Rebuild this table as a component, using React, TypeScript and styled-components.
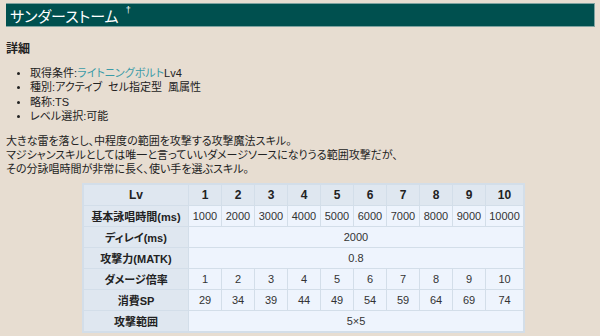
import React, { FC } from "react";
import styled, { createGlobalStyle } from "styled-components";

const GlobalStyle = createGlobalStyle`
  html, body {
    margin: 0;
    padding: 0;
    background: #e7ddd1;
  }
  body {
    font-family: "Liberation Sans", "Noto Sans CJK JP", sans-serif;
    font-size: 11px;
    color: #222;
    font-feature-settings: "palt";
  }
`;

const Page = styled.div`
  width: 600px;
  height: 336px;
  padding: 3px 5px 0 6px;
  box-sizing: border-box;
  overflow: hidden;
`;

const TitleBar = styled.h2`
  margin: 0;
  height: 24px;
  display: flex;
  align-items: center;
  padding-left: 4px;
  background: #00504f;
  border: 1px solid #7fa3a0;
  border-left: none;
  color: #fff;
  font-size: 15px;
  font-weight: normal;
  box-sizing: border-box;
`;

const Anchor = styled.sup`
  font-size: 9px;
  margin-left: 7px;
  align-self: flex-start;
  margin-top: 1px;
`;

const Heading = styled.h3`
  margin: 15px 0 0 0;
  font-size: 12px;
  font-weight: bold;
  line-height: 14px;
`;

const List = styled.ul`
  margin: 10px 0 0 0;
  padding-left: 24px;
  line-height: 14.3px;
  white-space: pre;
  li::marker {
    font-size: 10px;
  }
`;

const LinkText = styled.span`
  color: #3b9ba7;
`;

const Paragraph = styled.p`
  margin: 11px 0 0 0;
  line-height: 14px;
`;

const Table = styled.table`
  margin: 7px 0 0 76px;
  border-collapse: separate;
  border-spacing: 1px;
  background: #d3dee9;
  padding: 1px;
  table-layout: fixed;
  width: 439px;
`;

const HeadCell = styled.th<{ $big?: boolean }>`
  background: #dfe7f0;
  height: 20px;
  padding: 0;
  text-align: center;
  font-size: ${({ $big }) => ($big ? "12px" : "11px")};
  font-weight: bold;
  color: #222;
`;

const Cell = styled.td`
  background: #eef4fd;
  height: 20px;
  padding: 0;
  text-align: center;
  color: #333;
`;

const levels = [1, 2, 3, 4, 5, 6, 7, 8, 9, 10];

const rows: { label: string; values: (string | number)[] | string }[] = [
  { label: "基本詠唱時間(ms)", values: levels.map((l) => l * 1000) },
  { label: "ディレイ(ms)", values: "2000" },
  { label: "攻撃力(MATK)", values: "0.8" },
  { label: "ダメージ倍率", values: levels },
  { label: "消費SP", values: levels.map((l) => 24 + l * 5) },
  { label: "攻撃範囲", values: "5×5" },
];

const App: FC = () => {
  return (
    <Page>
      <GlobalStyle />
      <TitleBar>
        サンダーストーム<Anchor>†</Anchor>
      </TitleBar>
      <Heading>詳細</Heading>
      <List>
        <li>
          取得条件:<LinkText>ライトニングボルト</LinkText>Lv4
        </li>
        <li>{"種別:アクティブ  セル指定型  風属性"}</li>
        <li>略称:TS</li>
        <li>レベル選択:可能</li>
      </List>
      <Paragraph>
        大きな雷を落とし、中程度の範囲を攻撃する攻撃魔法スキル。
        <br />
        マジシャンスキルとしては唯一と言っていいダメージソースになりうる範囲攻撃だが、
        <br />
        その分詠唱時間が非常に長く、使い手を選ぶスキル。
      </Paragraph>
      <Table>
        <colgroup>
          <col style={{ width: 104 }} />
          {levels.map((l) => (
            <col key={l} style={{ width: l === 10 ? 37 : 32 }} />
          ))}
        </colgroup>
        <tbody>
          <tr>
            <HeadCell $big>Lv</HeadCell>
            {levels.map((l) => (
              <HeadCell key={l} $big>
                {l}
              </HeadCell>
            ))}
          </tr>
          {rows.map((row) => (
            <tr key={row.label}>
              <HeadCell>{row.label}</HeadCell>
              {typeof row.values === "string" ? (
                <Cell colSpan={10}>{row.values}</Cell>
              ) : (
                row.values.map((v, i) => <Cell key={i}>{v}</Cell>)
              )}
            </tr>
          ))}
        </tbody>
      </Table>
    </Page>
  );
};

export default App;
